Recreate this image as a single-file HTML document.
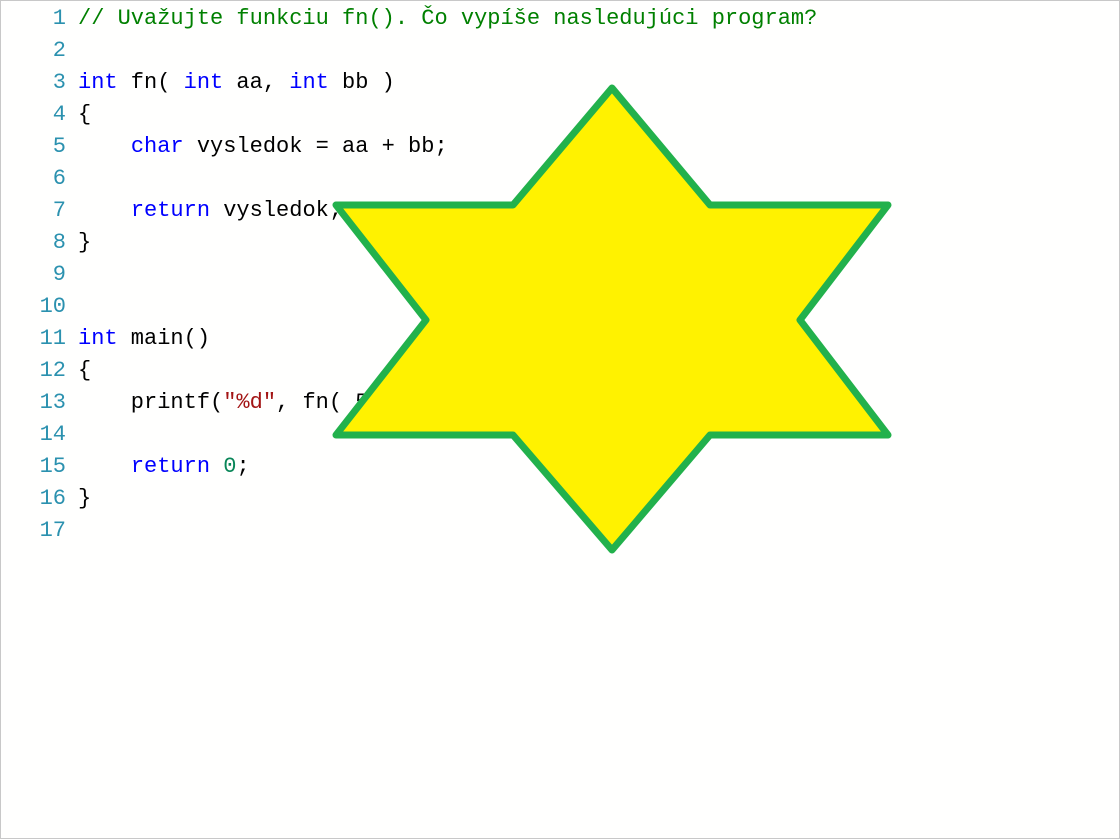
<!DOCTYPE html>
<html><head><meta charset="utf-8"><style>
html,body{margin:0;padding:0;}
body{width:1120px;height:839px;position:relative;background:#fffffe;overflow:hidden;}
.frame{position:absolute;left:0;top:0;width:1118px;height:837px;border:1px solid #c8c8c8;}
.code{position:absolute;left:0;top:3px;font-family:"Liberation Mono","DejaVu Sans Mono",monospace;font-size:22px;line-height:32px;white-space:pre;color:#000;}
.ln{display:inline-block;width:66px;text-align:right;color:#2b91af;margin-right:12px;}
.c{color:#008000}.k{color:#0000ff}.s{color:#a31515}.n{color:#098658}
svg{position:absolute;left:0;top:0;}
</style></head><body>
<div class="frame"></div>
<div class="code"><div><span class="ln">1</span><span class="c">// Uvažujte funkciu fn(). Čo vypíše nasledujúci program?</span></div><div><span class="ln">2</span></div><div><span class="ln">3</span><span class="k">int</span> fn( <span class="k">int</span> aa, <span class="k">int</span> bb )</div><div><span class="ln">4</span>{</div><div><span class="ln">5</span>    <span class="k">char</span> vysledok = aa + bb;</div><div><span class="ln">6</span></div><div><span class="ln">7</span>    <span class="k">return</span> vysledok;</div><div><span class="ln">8</span>}</div><div><span class="ln">9</span></div><div><span class="ln">10</span></div><div><span class="ln">11</span><span class="k">int</span> main()</div><div><span class="ln">12</span>{</div><div><span class="ln">13</span>    printf(<span class="s">"%d"</span>, fn( 5, 6 ) );</div><div><span class="ln">14</span></div><div><span class="ln">15</span>    <span class="k">return</span> <span class="n">0</span>;</div><div><span class="ln">16</span>}</div><div><span class="ln">17</span></div></div>
<svg width="1120" height="839"><polygon points="612,88 710,205 888,205 800,320 888,435 710,435 612,550 513,435 336,435 426,320 336,205 513,205" fill="#fff200" stroke="#22b14c" stroke-width="7" stroke-linejoin="round"/></svg>
</body></html>
